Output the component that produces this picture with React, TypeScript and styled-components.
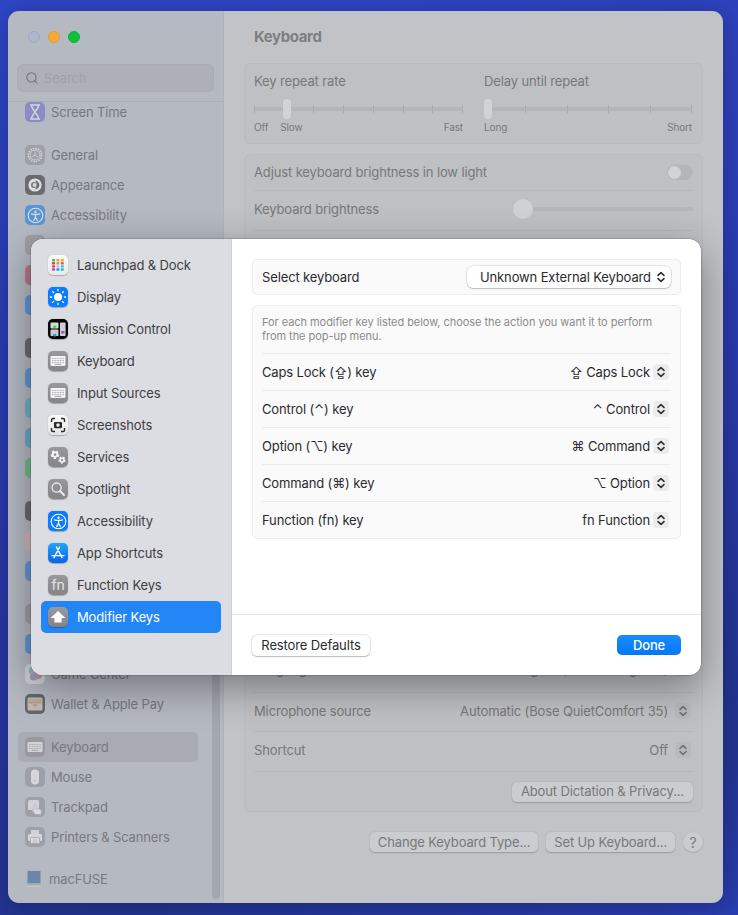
import React from "react";
import styled, { createGlobalStyle } from "styled-components";
import { Search } from "lucide-react";

const Global = createGlobalStyle`
  html, body {
    margin: 0;
    padding: 0;
    width: 738px;
    height: 915px;
    overflow: hidden;
    background: #2a3bb0;
  }
  * {
    box-sizing: border-box;
  }
`;

const Page = styled.div`
  position: relative;
  width: 738px;
  height: 915px;
  padding: 11px 15px 12px 8px;
  background: linear-gradient(165deg, #2f46c4 0%, #2b3cb2 45%, #22348f 85%, #2a3db0 100%);
  font-family: Inter, "Noto Sans", "DejaVu Sans", sans-serif;
  font-size: 13px;
  letter-spacing: -0.13px;
`;

/* dimmed settings window behind the sheet */
const Window = styled.div`
  display: flex;
  width: 715px;
  height: 892px;
  border-radius: 11px;
  overflow: hidden;
  box-shadow: 0 4px 24px rgba(0, 0, 20, 0.25);
`;

const Sidebar = styled.aside`
  position: relative;
  display: flex;
  flex-direction: column;
  flex: 0 0 216px;
  background: #b5b9c2;
  border-right: 1px solid #b0b3ba;
`;

const SidebarHeader = styled.div`
  flex: 0 0 91px;
  padding: 20px 9px 0;
  border-bottom: 1px solid #a9adb6;
`;

const TrafficLights = styled.div`
  display: flex;
  gap: 8px;
  padding-left: 11px;
  margin-bottom: 21px;
`;

const Light = styled.span<{ $bg: string; $edge: string }>`
  width: 12px;
  height: 12px;
  border-radius: 50%;
  background: ${(p) => p.$bg};
  border: 1px solid ${(p) => p.$edge};
`;

const SearchField = styled.div`
  display: flex;
  align-items: center;
  gap: 5px;
  width: 197px;
  height: 28px;
  padding-left: 7px;
  border-radius: 6px;
  background: #adb0b8;
  border: 1px solid #a9acb5;
  color: #9da1aa;
  svg {
    color: #6f7176;
  }
`;

const SidebarViewport = styled.div`
  flex: 1;
  overflow: hidden;
`;

const SidebarList = styled.div`
  display: flex;
  flex-direction: column;
  gap: 13px;
  margin-top: -5px;
`;

const SidebarGroup = styled.div`
  display: flex;
  flex-direction: column;
`;

const SidebarRow = styled.div<{ $selected?: boolean }>`
  display: flex;
  align-items: center;
  gap: 6px;
  width: 180px;
  height: 30px;
  margin-left: 10px;
  padding-left: 7px;
  border-radius: 5px;
  color: #77797e;
  white-space: nowrap;
  background: ${(p) => (p.$selected ? "#a8abb3" : "transparent")};
`;

const FuseRow = styled(SidebarRow)`
  gap: 7px;
  padding-left: 8px;
  height: 28px;
`;

const SidebarScrollbar = styled.div`
  position: absolute;
  right: 3px;
  top: 300px;
  bottom: 4px;
  width: 8px;
  border-radius: 4px;
  background: #a3a7b0;
`;

const Tile = styled.span<{ $bg: string; $dim?: boolean }>`
  display: flex;
  align-items: center;
  justify-content: center;
  flex: 0 0 20px;
  width: 20px;
  height: 20px;
  border-radius: 5px;
  background: ${(p) => p.$bg};
  opacity: ${(p) => (p.$dim ? 0.55 : 1)};
  color: #fff;
  overflow: hidden;
  box-shadow: ${(p) => (p.$dim ? "none" : "0 0.5px 1px rgba(0, 0, 0, 0.25)")};
`;

const FnLabel = styled.span`
  font-size: 14px;
  line-height: 1;
  color: #e6e6e8;
`;

const Main = styled.main`
  flex: 1;
  display: flex;
  flex-direction: column;
  padding: 0 20px;
  background: #c2c3c6;
  color: #77787b;
`;

const PageTitle = styled.h1`
  margin: 0;
  height: 52px;
  padding: 17px 10px 0;
  font-size: 15px;
  line-height: 18px;
  font-weight: 700;
  letter-spacing: -0.4px;
  color: #7e7f82;
`;

const Card = styled.section`
  padding: 0 9px;
  margin-bottom: 10px;
  border: 1px solid #babbbe;
  border-radius: 6px;
  background: #bfc0c3;
`;

const SliderColumns = styled.div`
  display: grid;
  grid-template-columns: 209px 208px;
  gap: 21px;
  height: 79px;
  padding-top: 8px;
`;

const SliderLabel = styled.div`
  line-height: 18px;
  margin-bottom: 9px;
`;

const TickedTrack = styled.div`
  position: relative;
  display: flex;
  align-items: center;
  justify-content: space-between;
  height: 20px;
  &::before {
    content: "";
    position: absolute;
    left: 0;
    right: 0;
    top: 8px;
    height: 4px;
    background: #b5b6b9;
  }
`;

const Tick = styled.span`
  position: relative;
  width: 1px;
  height: 8px;
  background: #a9aaad;
`;

const SliderThumb = styled.span<{ $left: number }>`
  position: absolute;
  left: ${(p) => p.$left}px;
  top: 0;
  width: 8px;
  height: 20px;
  border-radius: 4px;
  background: #d2d3d4;
`;

const TickCaptions = styled.div`
  display: flex;
  justify-content: space-between;
  margin-top: 1px;
  font-size: 10px;
  line-height: 14px;
`;

const CaptionGroup = styled.span`
  display: flex;
  gap: 12px;
`;

const SettingRow = styled.div<{ $h: number; $lift?: number }>`
  display: flex;
  align-items: center;
  justify-content: space-between;
  height: ${(p) => p.$h}px;
  padding-bottom: ${(p) => p.$lift ?? 3}px;
  border-bottom: 1px solid #b6b7ba;
  &:last-child {
    border-bottom: none;
  }
`;

const Toggle = styled.span`
  position: relative;
  width: 26px;
  height: 15px;
  margin-top: 2px;
  border-radius: 8px;
  background: #b4b5b8;
  &::after {
    content: "";
    position: absolute;
    left: 1px;
    top: 1px;
    width: 13px;
    height: 13px;
    border-radius: 50%;
    background: #d2d3d4;
  }
`;

const BrightnessSlider = styled.span`
  position: relative;
  width: 180px;
  height: 20px;
  &::before {
    content: "";
    position: absolute;
    left: 0;
    right: 0;
    top: 8px;
    height: 4px;
    border-radius: 2px;
    background: #b5b6b9;
  }
  &::after {
    content: "";
    position: absolute;
    left: 0;
    top: 0;
    width: 20px;
    height: 20px;
    border-radius: 50%;
    background: #d0d1d2;
  }
`;

const CoveredRows = styled.div`
  height: 422px;
  border-bottom: 1px solid #b6b7ba;
`;

const TrailingValue = styled.span<{ $gap: number }>`
  display: flex;
  align-items: center;
  gap: ${(p) => p.$gap}px;
  padding-right: 2px;
  white-space: nowrap;
`;

const Stepper = styled.span<{ $sheet?: boolean }>`
  display: flex;
  align-items: center;
  justify-content: center;
  width: 16px;
  height: 16px;
  border-radius: 4px;
  background: ${(p) => (p.$sheet ? "#ececec" : "#b8b9bc")};
  color: ${(p) => (p.$sheet ? "#2d2d30" : "#6f7073")};
`;

const DimButton = styled.span<{ $pad?: number }>`
  display: inline-flex;
  align-items: center;
  justify-content: center;
  height: 20px;
  padding: 0 ${(p) => p.$pad ?? 8}px 1px;
  border-radius: 5px;
  background: #cbcccf;
  color: #77787b;
  white-space: nowrap;
  box-shadow: 0 0.5px 1.5px rgba(0, 0, 0, 0.22);
`;

const DictationActions = styled.div`
  display: flex;
  justify-content: flex-end;
  height: 39px;
  align-items: center;
`;

const BottomActions = styled.div`
  display: flex;
  justify-content: flex-end;
  align-items: center;
  gap: 8px;
  margin-top: 10px;
`;

const HelpButton = styled.span`
  display: flex;
  align-items: center;
  justify-content: center;
  width: 20px;
  height: 20px;
  border-radius: 50%;
  background: #cbcccf;
  color: #77787b;
  font-size: 14px;
  box-shadow: 0 0.5px 1.5px rgba(0, 0, 0, 0.22);
`;

/* sheet on top */
const Sheet = styled.div`
  position: absolute;
  left: 31px;
  top: 239px;
  display: flex;
  width: 670px;
  height: 436px;
  border-radius: 12px;
  overflow: hidden;
  background: #fff;
  box-shadow: 0 0 0 0.5px rgba(0, 0, 0, 0.25), 0 12px 40px rgba(0, 0, 0, 0.38);
`;

const SheetNav = styled.nav`
  display: flex;
  flex-direction: column;
  flex: 0 0 201px;
  padding: 10px 10px 0;
  background: #dcdde2;
  border-right: 1px solid #cfd0d4;
`;

const NavRow = styled.div<{ $active?: boolean }>`
  display: flex;
  align-items: center;
  gap: 9px;
  height: 32px;
  padding-left: 7px;
  border-radius: 5px;
  white-space: nowrap;
  color: ${(p) => (p.$active ? "#fff" : "#3e3e43")};
  background: ${(p) => (p.$active ? "#2386f7" : "transparent")};
`;

const SheetBody = styled.div`
  flex: 1;
  display: flex;
  flex-direction: column;
`;

const SheetContent = styled.div`
  flex: 1;
  display: flex;
  flex-direction: column;
  gap: 10px;
  padding: 20px 20px 0;
  color: #2b2b2e;
`;

const Panel = styled.section`
  padding: 0 9px;
  border: 1px solid #ececec;
  border-radius: 5px;
  background: #fafafa;
`;

const PanelRow = styled.div<{ $h: number; $plain?: boolean }>`
  display: flex;
  align-items: center;
  justify-content: space-between;
  height: ${(p) => p.$h}px;
  border-top: ${(p) => (p.$plain ? "none" : "1px solid #ebebeb")};
`;

const Hint = styled.p`
  margin: 0;
  padding: 9px 0 9px;
  font-size: 11px;
  line-height: 14px;
  letter-spacing: -0.05px;
  color: #8b8b8d;
  height: 47px;
`;

const PopupButton = styled.span`
  display: flex;
  align-items: center;
  justify-content: space-between;
  width: 204px;
  height: 22px;
  padding: 0 5px 0 13px;
  border-radius: 6px;
  background: #fff;
  white-space: nowrap;
  box-shadow: 0 0 0 0.5px rgba(0, 0, 0, 0.14), 0 1px 1.5px rgba(0, 0, 0, 0.2);
`;

const SheetFooter = styled.footer`
  display: flex;
  align-items: center;
  justify-content: space-between;
  flex: 0 0 61px;
  padding: 0 20px;
  border-top: 1px solid #e3e3e3;
`;

const FooterButton = styled.span`
  display: flex;
  align-items: center;
  justify-content: center;
  width: 118px;
  height: 21px;
  padding-bottom: 1px;
  border-radius: 5px;
  background: #fff;
  color: #2b2b2e;
  box-shadow: 0 0 0 0.5px rgba(0, 0, 0, 0.16), 0 1px 1.5px rgba(0, 0, 0, 0.22);
`;

const DoneButton = styled.span`
  display: flex;
  align-items: center;
  justify-content: center;
  width: 64px;
  height: 20px;
  padding-bottom: 1px;
  border-radius: 5px;
  background: linear-gradient(180deg, #1a8bff, #0477f7);
  color: #fff;
  font-weight: 500;
`;

const Chevrons = () => (
  <svg width="10" height="12" viewBox="0 0 10 12" fill="none" stroke="currentColor" strokeWidth="1.5" strokeLinecap="round" strokeLinejoin="round">
    <path d="M2 4.4 5 1.6l3 2.8M2 7.6l3 2.8 3-2.8" />
  </svg>
);

const KeyboardGlyph = ({ fill = "#f4f4f5", line = "#9a9a9e" }: { fill?: string; line?: string }) => (
  <svg width="16" height="12" viewBox="0 0 16 12">
    <rect x="0.5" y="1" width="15" height="10" rx="1.2" fill={fill} />
    <path d="M2 3.5h12M2 5.5h12M2 7.5h12" stroke={line} strokeWidth="0.8" strokeDasharray="1 0.6" />
    <path d="M4.5 9.4h7" stroke={line} strokeWidth="0.9" />
  </svg>
);

const Gear = ({ cx, cy, r }: { cx: number; cy: number; r: number }) => (
  <g fill="none" stroke="#f2f2f3">
    <circle cx={cx} cy={cy} r={r * 0.65} strokeWidth={r * 0.55} />
    <circle cx={cx} cy={cy} r={r} strokeWidth={r * 0.45} strokeDasharray={`${r * 0.62} ${r * 0.62}`} />
  </g>
);

const launchpadDots = [
  "#35c759", "#f5a623", "#f5a623",
  "#ef3e36", "#a5a5a8", "#ef5a4a",
  "#ef3e36", "#c4c4c7", "#35c3d8",
  "#a64fd0", "#1e9bf0", "#22b8e0",
];

const LaunchpadGlyph = () => (
  <svg width="20" height="20" viewBox="0 0 20 20">
    {launchpadDots.map((c, i) => (
      <rect key={i} x={4 + (i % 3) * 4.4} y={4 + Math.floor(i / 3) * 3.1} width="3" height="2.4" rx="0.6" fill={c} />
    ))}
  </svg>
);

const SunGlyph = () => (
  <svg width="18" height="18" viewBox="0 0 18 18" fill="#fff" stroke="#fff" strokeLinecap="round">
    <circle cx="9" cy="9" r="4" stroke="none" />
    <path strokeWidth="1.3" d="M9 1.4v1.2M9 15.4v1.2M1.4 9h1.2M15.4 9h1.2M3.6 3.6l.9.9M13.5 13.5l.9.9M3.6 14.4l.9-.9M13.5 4.5l.9-.9" />
  </svg>
);

const MissionGlyph = () => (
  <svg width="20" height="20" viewBox="0 0 20 20">
    <rect x="2.5" y="3.6" width="8" height="6" rx="0.8" fill="#d9dadb" />
    <rect x="5" y="6.6" width="3.4" height="2.4" rx="1" fill="#3ddc5a" />
    <rect x="2.5" y="10.5" width="8" height="6.5" rx="0.8" fill="#c9cacb" />
    <rect x="5" y="15" width="3.4" height="2.4" rx="1" fill="#1e9bf0" />
    <rect x="12" y="3.6" width="5.6" height="13.4" rx="0.8" fill="#cfd0d1" />
    <rect x="13" y="12" width="3.6" height="2.6" rx="1" fill="#a64fd0" />
  </svg>
);

const ScreenshotGlyph = () => (
  <svg width="18" height="18" viewBox="0 0 18 18" fill="none" stroke="#2a2a2c" strokeWidth="1.4">
    <path d="M2.5 6V3.8a1.3 1.3 0 0 1 1.3-1.3H6M12 2.5h2.2a1.3 1.3 0 0 1 1.3 1.3V6M15.5 12v2.2a1.3 1.3 0 0 1-1.3 1.3H12M6 15.5H3.8a1.3 1.3 0 0 1-1.3-1.3V12" />
    <rect x="5" y="6" width="8" height="6.2" rx="1.2" fill="#2a2a2c" stroke="none" />
    <circle cx="9" cy="9.1" r="1.8" fill="#f0f0f0" stroke="none" />
  </svg>
);

const GearsGlyph = () => (
  <svg width="20" height="20" viewBox="0 0 20 20">
    <Gear cx={7} cy={7.6} r={3.6} />
    <Gear cx={14} cy={13} r={3} />
  </svg>
);

const MagnifierGlyph = () => (
  <svg width="16" height="16" viewBox="0 0 16 16" fill="none" stroke="#ececee">
    <circle cx="6.6" cy="6.6" r="4.6" strokeWidth="1.3" />
    <path d="M10 10l4 4" strokeWidth="1.9" strokeLinecap="round" />
  </svg>
);

const PersonGlyph = () => (
  <svg width="17" height="17" viewBox="0 0 17 17" fill="none" stroke="#fff">
    <circle cx="8.5" cy="8.5" r="7.3" strokeWidth="1.1" />
    <circle cx="8.5" cy="4.8" r="1.2" fill="#fff" stroke="none" />
    <path d="M4.4 6.8c2.7.7 5.5.7 8.2 0M8.5 7.4v3M8.5 10.2l-1.8 3.4M8.5 10.2l1.8 3.4" strokeWidth="1.2" strokeLinecap="round" />
  </svg>
);

const AppStoreGlyph = () => (
  <svg width="16" height="16" viewBox="0 0 16 16" fill="none" stroke="#fff" strokeWidth="1.4" strokeLinecap="round">
    <path d="M9.6 2 4 12.6M6.4 2 12 12.6M2 10.6h12" />
  </svg>
);

const ArrowKeyGlyph = () => (
  <svg width="16" height="14" viewBox="0 0 16 14">
    <path d="M8 1 15.4 8H11.6v4.6H4.4V8H.6Z" fill="#fff" />
  </svg>
);

const HourglassGlyph = () => (
  <svg width="12" height="16" viewBox="0 0 12 16" fill="none" stroke="#eceaf6" strokeWidth="1.4">
    <path d="M1 1h10M1 15h10M2.4 1c0 3.4 2.2 4.6 3.6 7 1.4-2.4 3.6-3.6 3.6-7M2.4 15c0-3.4 2.2-4.6 3.6-7 1.4 2.4 3.6 3.6 3.6 7" />
  </svg>
);

const AppearanceGlyph = () => (
  <svg width="16" height="16" viewBox="0 0 16 16">
    <circle cx="8" cy="8" r="6.6" fill="#fff" />
    <path d="M8 3.6a4.4 4.4 0 0 1 0 8.8c1.2-1.2 1.6-2.8 1.6-4.4S9.2 4.8 8 3.6Z" fill="#333" />
    <circle cx="7" cy="8" r="3" fill="#444" />
    <circle cx="7.6" cy="8" r="2" fill="#eee" />
  </svg>
);

const MouseGlyph = () => (
  <svg width="10" height="16" viewBox="0 0 10 16">
    <rect x="1" y="0.5" width="8" height="15" rx="4" fill="#f1f1f2" />
    <circle cx="5" cy="11.5" r="0.7" fill="#8c8d90" />
  </svg>
);

const TrackpadGlyph = () => (
  <svg width="18" height="18" viewBox="0 0 18 18">
    <rect x="2" y="2" width="11" height="10" rx="1.5" fill="#e8e8ea" />
    <path d="M8 7.5c0-1.4 2-1.4 2 0v3l3 .5c2 .4 2.6 1.4 2.4 3L15 16.5H9.5L6.5 13c-.8-1 .4-2 1.5-1Z" fill="#f4f4f5" stroke="#9b9da0" strokeWidth="0.6" />
  </svg>
);

const PrinterGlyph = () => (
  <svg width="16" height="16" viewBox="0 0 16 16">
    <rect x="4" y="1" width="8" height="4" fill="#e9e9ea" />
    <rect x="1" y="5" width="14" height="7" rx="1.5" fill="#f1f1f2" />
    <rect x="3.5" y="8.5" width="9" height="6" rx="0.5" fill="#fff" stroke="#8f9094" strokeWidth="0.8" />
    <path d="M5.5 11h5M5.5 13h5" stroke="#8f9094" strokeWidth="0.7" />
  </svg>
);

const WalletGlyph = () => (
  <svg width="16" height="14" viewBox="0 0 16 14">
    <rect x="0.5" y="0.5" width="15" height="13" rx="1.5" fill="#c9c1ad" />
    <rect x="1.5" y="2" width="13" height="1.6" fill="#b5a66c" />
    <rect x="1.5" y="3.6" width="13" height="1.4" fill="#c9a25a" />
    <rect x="1.5" y="5" width="13" height="1.4" fill="#c07a66" />
    <path d="M5.5 7.5h5l-1 1.8h-3z" fill="#b96a5c" />
  </svg>
);

const GameCenterGlyph = () => (
  <svg width="18" height="18" viewBox="0 0 18 18">
    <circle cx="7" cy="6" r="4.2" fill="#7fb6c4" />
    <circle cx="12" cy="10" r="4" fill="#c8778a" />
    <circle cx="7.5" cy="12" r="3.6" fill="#9a84c4" />
  </svg>
);

const FuseGlyph = () => (
  <svg width="16" height="18" viewBox="0 0 16 18">
    <path d="M1.5 1h13v12h-13z" fill="#6a86a8" />
    <path d="M1 13h14v2.5H1z" fill="#a5a9a8" />
    <path d="M1 15.5h14V17H1z" fill="#c3c6c4" />
  </svg>
);

function GeneralGlyph() {
  return (
    <svg width="18" height="18" viewBox="0 0 18 18" fill="none" stroke="#f0f0f1">
      <circle cx="9" cy="9" r="6.6" strokeWidth="1.6" strokeDasharray="1.4 1.2" />
      <circle cx="9" cy="9" r="5" strokeWidth="0.8" />
      <path d="M9 5.5V9l3 1.8M9 9 6 10.8" strokeWidth="0.8" />
    </svg>
  );
}

// rows with no label are fully covered by the sheet; only their tile edge shows
type BackRow = { label?: string; bg: string; glyph?: React.ReactNode; selected?: boolean };

const windowGroups: BackRow[][] = [
  [{ label: "Screen Time", bg: "#6a69c6", glyph: <HourglassGlyph /> }],
  [
    { label: "General", bg: "#8b8c90", glyph: <GeneralGlyph /> },
    { label: "Appearance", bg: "#2c2c2e", glyph: <AppearanceGlyph /> },
    { label: "Accessibility", bg: "#0f78e8", glyph: <PersonGlyph /> },
    { bg: "#8b8c90" },
    { bg: "#b5425e" },
    { bg: "#1f7de0" },
  ],
  [
    { bg: "#2c2c2e" },
    { bg: "#1f7de0" },
    { bg: "#3fa9c4" },
    { bg: "#2f9ad4" },
    { bg: "#3cb860" },
  ],
  [
    { bg: "#2c2c2e" },
    { bg: "#e8b4b8" },
    { bg: "#1f7de0" },
  ],
  [
    { bg: "#8b8c90" },
    { bg: "#1f7de0" },
    { label: "Game Center", bg: "#e9e9ea", glyph: <GameCenterGlyph /> },
    { label: "Wallet & Apple Pay", bg: "#232325", glyph: <WalletGlyph /> },
  ],
  [
    { label: "Keyboard", bg: "#8b8c90", glyph: <KeyboardGlyph />, selected: true },
    { label: "Mouse", bg: "#8b8c90", glyph: <MouseGlyph /> },
    { label: "Trackpad", bg: "#8b8c90", glyph: <TrackpadGlyph /> },
    { label: "Printers & Scanners", bg: "#8b8c90", glyph: <PrinterGlyph /> },
  ],
];

const navRows: { label: string; bg: string; glyph: React.ReactNode; active?: boolean }[] = [
  { label: "Launchpad & Dock", bg: "linear-gradient(180deg,#fbfbfb,#e9e9ec)", glyph: <LaunchpadGlyph /> },
  { label: "Display", bg: "#0a7cff", glyph: <SunGlyph /> },
  { label: "Mission Control", bg: "#050505", glyph: <MissionGlyph /> },
  { label: "Keyboard", bg: "linear-gradient(180deg,#98989c,#858589)", glyph: <KeyboardGlyph /> },
  { label: "Input Sources", bg: "linear-gradient(180deg,#98989c,#858589)", glyph: <KeyboardGlyph /> },
  { label: "Screenshots", bg: "linear-gradient(180deg,#fafafa,#e4e4e6)", glyph: <ScreenshotGlyph /> },
  { label: "Services", bg: "linear-gradient(180deg,#98989c,#858589)", glyph: <GearsGlyph /> },
  { label: "Spotlight", bg: "linear-gradient(180deg,#98989c,#858589)", glyph: <MagnifierGlyph /> },
  { label: "Accessibility", bg: "#0a7cff", glyph: <PersonGlyph /> },
  { label: "App Shortcuts", bg: "linear-gradient(180deg,#22a6f8,#0a63e6)", glyph: <AppStoreGlyph /> },
  { label: "Function Keys", bg: "linear-gradient(180deg,#98989c,#858589)", glyph: <FnLabel>fn</FnLabel> },
  { label: "Modifier Keys", bg: "linear-gradient(180deg,#9a9a9e,#838387)", glyph: <ArrowKeyGlyph />, active: true },
];

const modifierRows = [
  { key: "Caps Lock (⇪) key", action: "⇪ Caps Lock" },
  { key: "Control (⌃) key", action: "⌃ Control" },
  { key: "Option (⌥) key", action: "⌘ Command" },
  { key: "Command (⌘) key", action: "⌥ Option" },
  { key: "Function (fn) key", action: "fn Function" },
];

const App = () => {
  return (
    <Page>
      <Global />
      <Window>
        <Sidebar>
          <SidebarHeader>
            <TrafficLights>
              <Light $bg="#b1b7cb" $edge="#a2a8bd" />
              <Light $bg="#f7aa35" $edge="#e89a2a" />
              <Light $bg="#0cc13c" $edge="#0cb237" />
            </TrafficLights>
            <SearchField>
              <Search size={14} strokeWidth={1.8} />
              Search
            </SearchField>
          </SidebarHeader>
          <SidebarViewport>
            <SidebarList>
              {windowGroups.map((group, g) => (
                <SidebarGroup key={g}>
                  {group.map((row, i) => (
                    <SidebarRow key={i} $selected={row.selected}>
                      <Tile $bg={row.bg} $dim>
                        {row.glyph}
                      </Tile>
                      {row.label}
                    </SidebarRow>
                  ))}
                </SidebarGroup>
              ))}
              <SidebarGroup>
                <FuseRow>
                  <FuseGlyph />
                  macFUSE
                </FuseRow>
              </SidebarGroup>
            </SidebarList>
          </SidebarViewport>
          <SidebarScrollbar />
        </Sidebar>

        <Main>
          <PageTitle>Keyboard</PageTitle>
          <Card>
            <SliderColumns>
              <div>
                <SliderLabel>Key repeat rate</SliderLabel>
                <TickedTrack>
                  {Array.from({ length: 8 }).map((_, i) => (
                    <Tick key={i} />
                  ))}
                  <SliderThumb $left={29} />
                </TickedTrack>
                <TickCaptions>
                  <CaptionGroup>
                    <span>Off</span>
                    <span>Slow</span>
                  </CaptionGroup>
                  <span>Fast</span>
                </TickCaptions>
              </div>
              <div>
                <SliderLabel>Delay until repeat</SliderLabel>
                <TickedTrack>
                  {Array.from({ length: 6 }).map((_, i) => (
                    <Tick key={i} />
                  ))}
                  <SliderThumb $left={0} />
                </TickedTrack>
                <TickCaptions>
                  <span>Long</span>
                  <span>Short</span>
                </TickCaptions>
              </div>
            </SliderColumns>
          </Card>
          <Card>
            <SettingRow $h={36} $lift={2}>
              Adjust keyboard brightness in low light
              <Toggle />
            </SettingRow>
            <SettingRow $h={40}>
              Keyboard brightness
              <BrightnessSlider />
            </SettingRow>
            <CoveredRows />
            <SettingRow $h={40} $lift={7}>
              Language
              <TrailingValue $gap={7}>
                English (United Kingdom)
                <Stepper>
                  <Chevrons />
                </Stepper>
              </TrailingValue>
            </SettingRow>
            <SettingRow $h={39}>
              Microphone source
              <TrailingValue $gap={7}>
                Automatic (Bose QuietComfort 35)
                <Stepper>
                  <Chevrons />
                </Stepper>
              </TrailingValue>
            </SettingRow>
            <SettingRow $h={40}>
              Shortcut
              <TrailingValue $gap={7}>
                Off
                <Stepper>
                  <Chevrons />
                </Stepper>
              </TrailingValue>
            </SettingRow>
            <DictationActions>
              <DimButton $pad={9}>About Dictation &amp; Privacy...</DimButton>
            </DictationActions>
          </Card>
          <BottomActions>
            <DimButton>Change Keyboard Type...</DimButton>
            <DimButton>Set Up Keyboard...</DimButton>
            <HelpButton>?</HelpButton>
          </BottomActions>
        </Main>
      </Window>

      <Sheet>
        <SheetNav>
          {navRows.map((row) => (
            <NavRow key={row.label} $active={row.active}>
              <Tile $bg={row.bg}>{row.glyph}</Tile>
              {row.label}
            </NavRow>
          ))}
        </SheetNav>
        <SheetBody>
          <SheetContent>
            <Panel>
              <PanelRow $h={34} $plain>
                Select keyboard
                <PopupButton>
                  Unknown External Keyboard
                  <Chevrons />
                </PopupButton>
              </PanelRow>
            </Panel>
            <Panel>
              <Hint>
                For each modifier key listed below, choose the action you want it to perform from the pop-up menu.
              </Hint>
              {modifierRows.map((row) => (
                <PanelRow key={row.key} $h={37}>
                  {row.key}
                  <TrailingValue $gap={3}>
                    {row.action}
                    <Stepper $sheet>
                      <Chevrons />
                    </Stepper>
                  </TrailingValue>
                </PanelRow>
              ))}
            </Panel>
          </SheetContent>
          <SheetFooter>
            <FooterButton>Restore Defaults</FooterButton>
            <DoneButton>Done</DoneButton>
          </SheetFooter>
        </SheetBody>
      </Sheet>
    </Page>
  );
};

export default App;
